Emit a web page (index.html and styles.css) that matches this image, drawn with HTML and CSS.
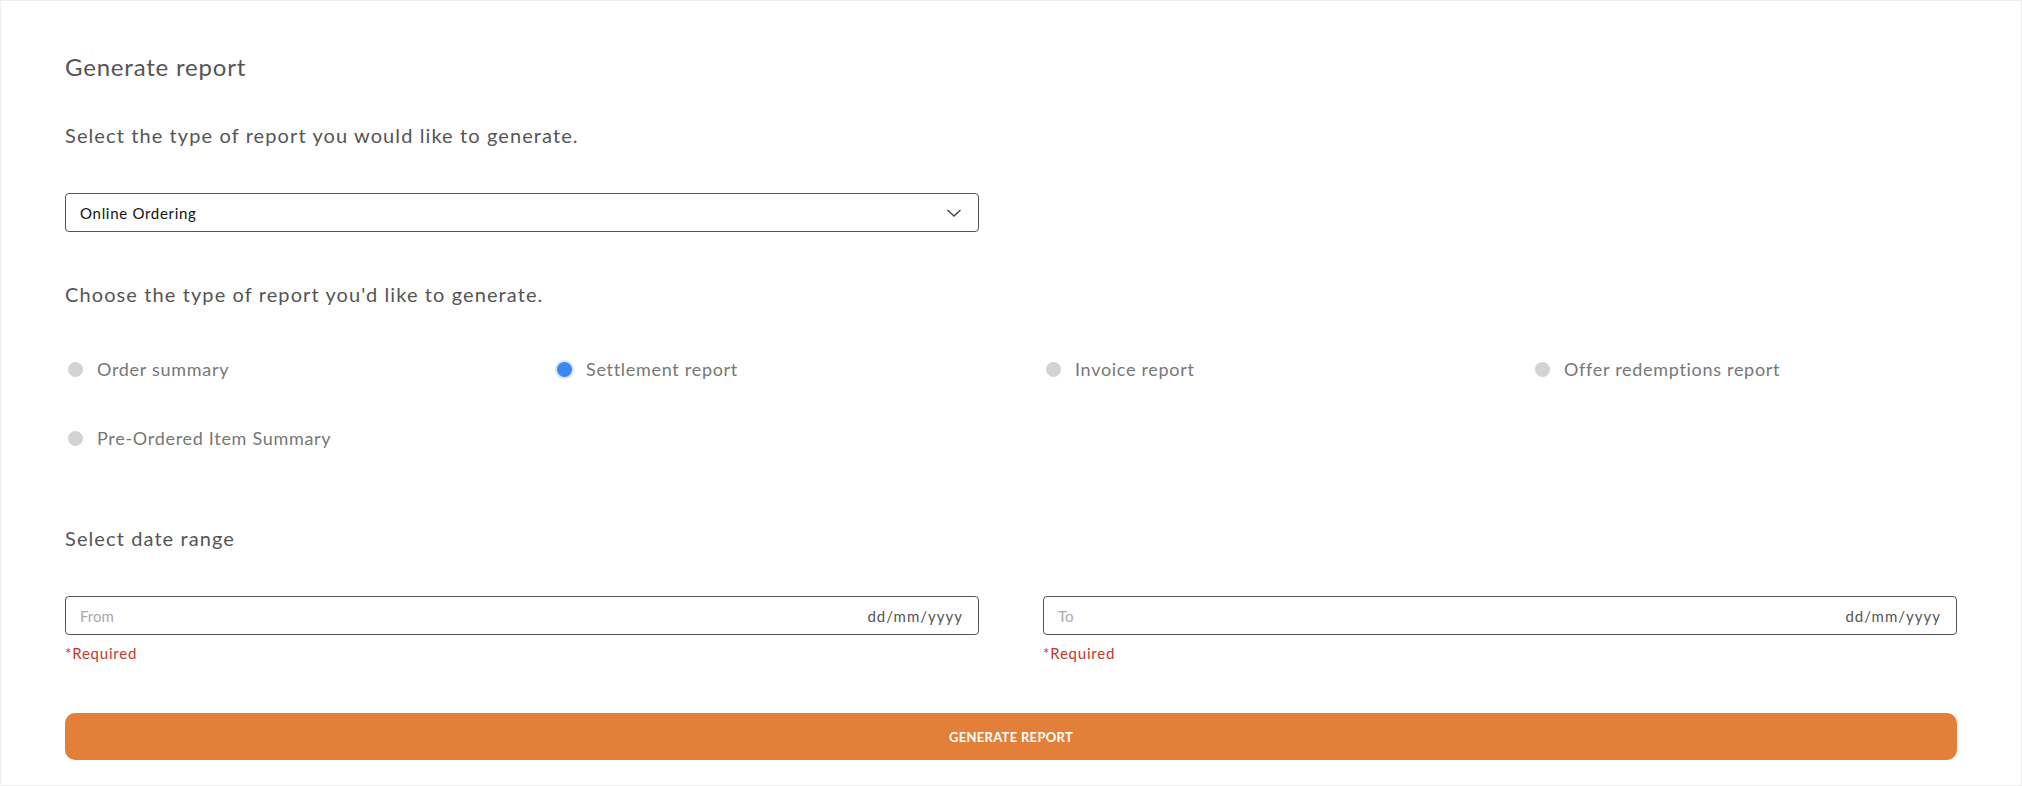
FILE: index.html
```html
<!DOCTYPE html>
<html lang="en">

<head>
    <meta charset="UTF-8">
    <meta name="viewport" content="width=device-width, initial-scale=1.0">
    <title>Generate report</title>
    <link rel="stylesheet" href="styles.css">
</head>

<body>
    <section class="card">
        <h1>Generate report</h1>

        <p class="lead">Select the type of report you would like to generate.</p>
        <div class="select">
            <span>Online Ordering</span>
            <svg width="16" height="10" viewBox="0 0 16 10"><polyline points="1.5,2 8,8 14.5,2" fill="none" stroke="#444" stroke-width="1.4"/></svg>
        </div>

        <p class="lead choose">Choose the type of report you'd like to generate.</p>
        <div class="radios">
            <label class="radio"><span class="dot"></span>Order summary</label>
            <label class="radio"><span class="dot checked"></span>Settlement report</label>
            <label class="radio"><span class="dot"></span>Invoice report</label>
            <label class="radio"><span class="dot"></span>Offer redemptions report</label>
            <label class="radio"><span class="dot"></span>Pre-Ordered Item Summary</label>
        </div>

        <p class="lead range">Select date range</p>
        <div class="dates">
            <div class="group">
                <div class="date">
                    <span class="ph">From</span>
                    <span class="fmt">dd/mm/yyyy</span>
                </div>
                <div class="req">*Required</div>
            </div>
            <div class="group">
                <div class="date">
                    <span class="ph">To</span>
                    <span class="fmt">dd/mm/yyyy</span>
                </div>
                <div class="req">*Required</div>
            </div>
        </div>

        <button class="generate" type="button">GENERATE REPORT</button>
    </section>
</body>

</html>
```

FILE: styles.css
```css
* {
    box-sizing: border-box;
}

body {
    margin: 0;
    padding: 1px;
    background-color: #eeeeee;
    font-family: Lato, "Open Sans", sans-serif;
}

.card {
    background-color: #fff;
    min-height: calc(100vh - 2px);
    padding: 51px 64px 20px;
}

h1 {
    margin: 0;
    font-size: 24px;
    line-height: 30px;
    font-weight: 400;
    letter-spacing: 0.8px;
    color: #555;
}

.lead {
    margin: 41px 0 0;
    font-size: 20px;
    line-height: 24px;
    letter-spacing: 1.1px;
    color: #555;
}

/* Dropdown */
.select {
    margin-top: 46px;
    width: calc(50% - 32px);
    height: 39px;
    border: 1px solid #555;
    border-radius: 4px;
    display: flex;
    align-items: center;
    justify-content: space-between;
    padding: 0 16px 0 14px;
    font-size: 15px;
    letter-spacing: 0.7px;
    color: #111;
}

.choose {
    margin-top: 50px;
}

/* Radio buttons */
.radios {
    margin-top: 51px;
    display: grid;
    grid-template-columns: repeat(4, 489px);
    row-gap: 45px;
}

.radio {
    display: flex;
    align-items: center;
    height: 24px;
    font-size: 18px;
    letter-spacing: 0.7px;
    color: #777;
}

.dot {
    width: 15px;
    height: 15px;
    border-radius: 50%;
    background-color: #d2d3d2;
    margin: 0 14px 0 3px;
}

.dot.checked {
    background-color: #3b87f4;
    box-shadow: 0 0 0 2px rgba(59, 135, 244, 0.22);
}

.range {
    margin-top: 76px;
}

/* Date range */
.dates {
    margin-top: 46px;
    display: grid;
    grid-template-columns: 1fr 1fr;
    column-gap: 64px;
}

.date {
    height: 39px;
    border: 1px solid #555;
    border-radius: 4px;
    display: flex;
    align-items: center;
    justify-content: space-between;
    padding: 0 15px 0 14px;
    font-size: 15px;
}

.ph {
    color: #aaa;
}

.fmt {
    color: #555;
    letter-spacing: 1px;
}

.req {
    margin-top: 9px;
    font-size: 15px;
    line-height: 18px;
    letter-spacing: 0.8px;
    color: #c0392b;
}

.generate {
    margin-top: 51px;
    width: 100%;
    height: 47px;
    border: none;
    border-radius: 10px;
    background-color: #e47f3a;
    color: #fff;
    font-family: Lato, sans-serif;
    font-size: 13px;
    font-weight: 700;
    letter-spacing: 0.3px;
    cursor: pointer;
}
```
